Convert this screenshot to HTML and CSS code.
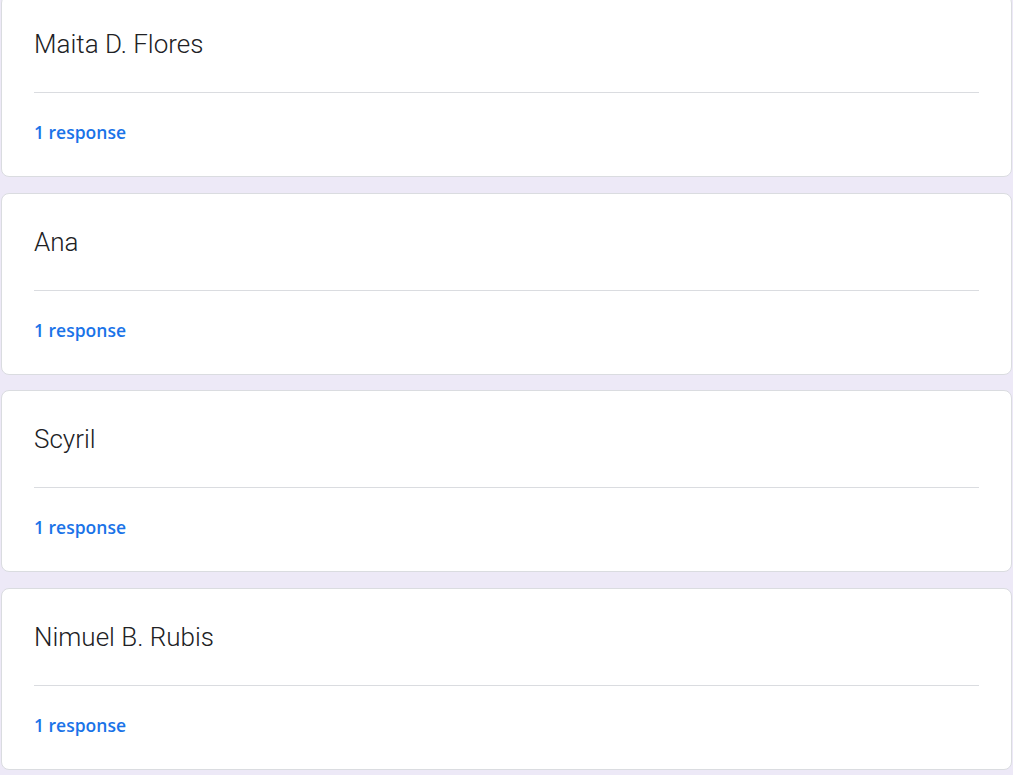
FILE: index.html
```html
<!DOCTYPE html>
<html>
<head>
<meta charset="utf-8">
<link rel="stylesheet" href="styles.css">
</head>
<body>
<main class="list">
  <section class="card first">
    <h2 class="title">Maita D. Flores</h2>
    <div class="divider"></div>
    <a class="count">1 response</a>
  </section>
  <section class="card">
    <h2 class="title">Ana</h2>
    <div class="divider"></div>
    <a class="count">1 response</a>
  </section>
  <section class="card">
    <h2 class="title">Scyril</h2>
    <div class="divider"></div>
    <a class="count">1 response</a>
  </section>
  <section class="card">
    <h2 class="title">Nimuel B. Rubis</h2>
    <div class="divider"></div>
    <a class="count">1 response</a>
  </section>
</main>
</body>
</html>
```
FILE: styles.css
```css
html, body {
  margin: 0;
  padding: 0;
  background: #ede9f7;
  height: 100%;
  overflow: hidden;
}
.list {
  display: flex;
  flex-direction: column;
  gap: 15.5px;
  padding: 0 1px 0 1px;
  margin-top: -5px;
}
.card {
  background: #ffffff;
  border: 1px solid #dadce0;
  border-radius: 8px;
  box-sizing: border-box;
  height: 182px;
  padding: 0 32px 0 32px;
  display: flex;
  flex-direction: column;
}
.title {
  margin: 0;
  padding-top: 33px;
  font-family: Roboto, "Liberation Sans", sans-serif;
  font-weight: 300;
  font-size: 26px;
  line-height: 30px;
  color: #202124;
  height: 63px;
  box-sizing: border-box;
}
.divider {
  height: 1px;
  background: #dadce0;
  margin-top: 33px;
}
.count {
  margin-top: 28px;
  font-family: "Open Sans", Roboto, sans-serif;
  font-weight: 600;
  font-size: 17.5px;
  line-height: 22px;
  color: #1a73e8;
}
```
